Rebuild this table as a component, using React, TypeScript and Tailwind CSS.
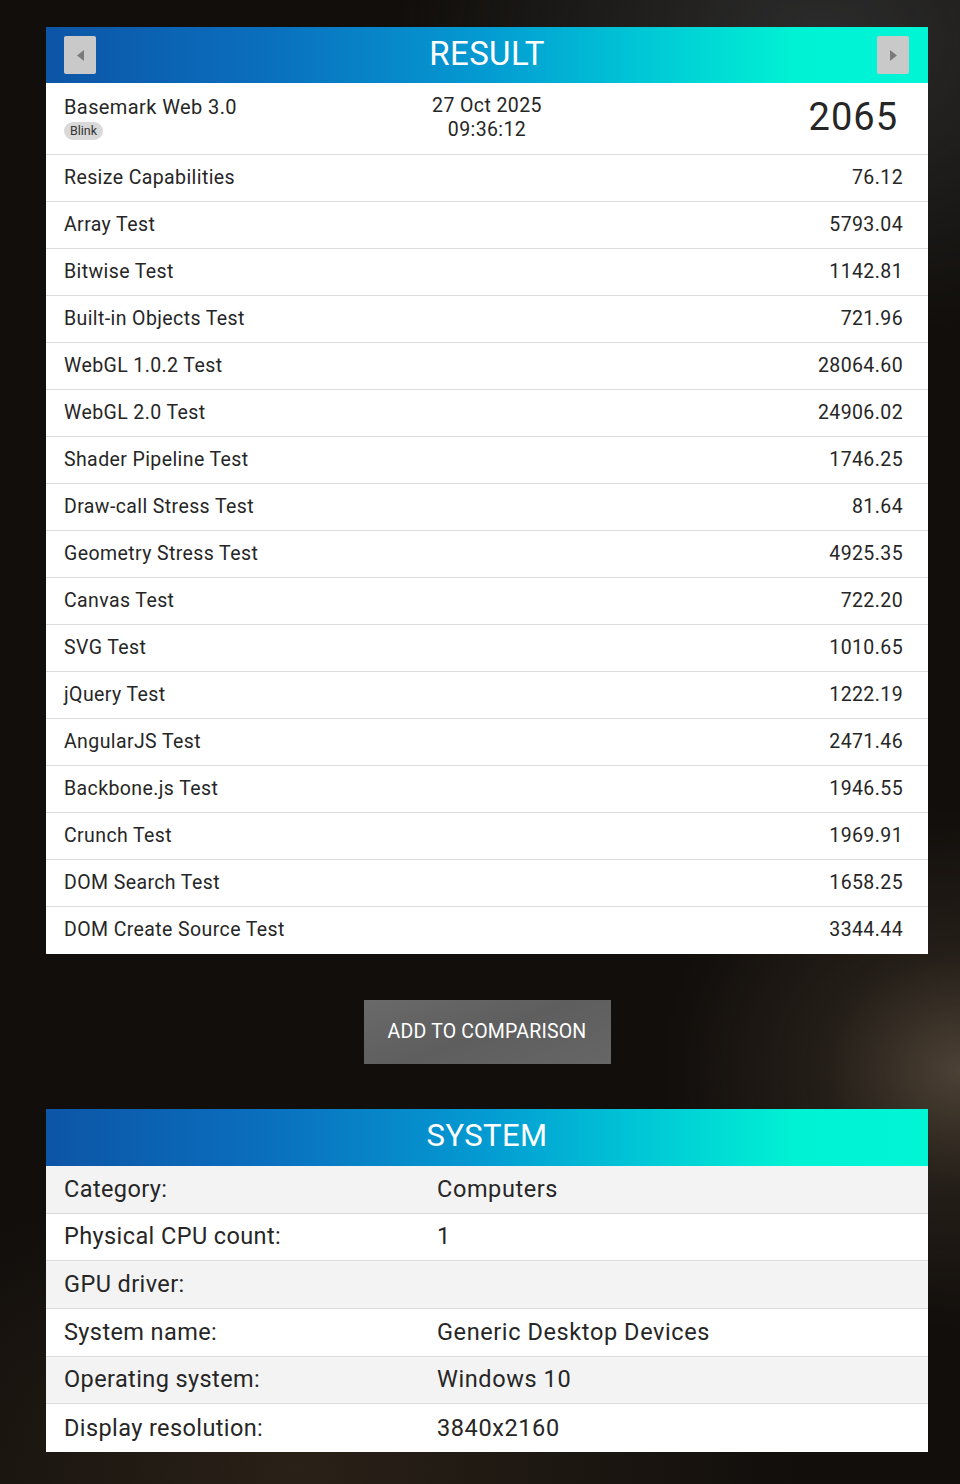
import { ReactNode } from "react";

const tests = [
  { name: "Resize Capabilities", score: "76.12" },
  { name: "Array Test", score: "5793.04" },
  { name: "Bitwise Test", score: "1142.81" },
  { name: "Built-in Objects Test", score: "721.96" },
  { name: "WebGL 1.0.2 Test", score: "28064.60" },
  { name: "WebGL 2.0 Test", score: "24906.02" },
  { name: "Shader Pipeline Test", score: "1746.25" },
  { name: "Draw-call Stress Test", score: "81.64" },
  { name: "Geometry Stress Test", score: "4925.35" },
  { name: "Canvas Test", score: "722.20" },
  { name: "SVG Test", score: "1010.65" },
  { name: "jQuery Test", score: "1222.19" },
  { name: "AngularJS Test", score: "2471.46" },
  { name: "Backbone.js Test", score: "1946.55" },
  { name: "Crunch Test", score: "1969.91" },
  { name: "DOM Search Test", score: "1658.25" },
  { name: "DOM Create Source Test", score: "3344.44" },
];

const system = [
  { label: "Category:", value: "Computers" },
  { label: "Physical CPU count:", value: "1" },
  { label: "GPU driver:", value: "" },
  { label: "System name:", value: "Generic Desktop Devices" },
  { label: "Operating system:", value: "Windows 10" },
  { label: "Display resolution:", value: "3840x2160" },
];

function PanelHeader({ children, tall }: { children: ReactNode; tall?: boolean }) {
  return (
    <div
      className={`relative flex items-center justify-center bg-[linear-gradient(90deg,#0d55a6_0%,#0a6fbe_25%,#049bd2_50%,#00c8d6_68%,#00f2d4_85%,#00f5d5_100%)] pb-[4px] ${
        tall ? "h-[57px]" : "h-[56px]"
      }`}
    >
      {children}
    </div>
  );
}

function ArrowButton({ dir }: { dir: "left" | "right" }) {
  return (
    <button
      className={`absolute top-[9px] flex h-[38px] w-[32px] items-center justify-center rounded-[2px] bg-[#c9c9c9] ${
        dir === "left" ? "left-[18px]" : "right-[19px]"
      }`}
    >
      <svg width="7" height="11" viewBox="0 0 7 11">
        {dir === "left" ? (
          <polygon points="7,0 7,11 0,5.5" fill="#7a7a7a" />
        ) : (
          <polygon points="0,0 0,11 7,5.5" fill="#7a7a7a" />
        )}
      </svg>
    </button>
  );
}

export default function App() {
  return (
    <div className="min-h-[1484px] bg-[#110e0b] bg-[radial-gradient(ellipse_300px_260px_at_960px_1070px,#4c4135_0%,rgba(60,50,40,0.45)_45%,transparent_100%),radial-gradient(ellipse_420px_300px_at_820px_40px,#2c2c2c_0%,transparent_100%),radial-gradient(ellipse_500px_300px_at_300px_1470px,#2a2118_0%,transparent_100%)] pt-[27px] pb-[32px] font-['Roboto',sans-serif] tracking-[0.4px] text-[#262626]">
      <div className="ml-[46px] w-[882px]">
        {/* Result */}
        <div className="bg-white">
          <PanelHeader>
            <ArrowButton dir="left" />
            <h1 className="text-[33px] leading-none text-white">RESULT</h1>
            <ArrowButton dir="right" />
          </PanelHeader>

          <div className="flex h-[72px] items-center border-b border-[#dcdcdc] pl-[18px] pr-[30px]">
            <div className="flex w-[300px] flex-col items-start pb-[2px]">
              <div className="text-[20px] leading-[22px]">Basemark Web 3.0</div>
              <span className="mt-[4px] rounded-full bg-[#d9d9d9] px-[6px] text-[12.5px] leading-[18px] tracking-normal text-[#333]">
                Blink
              </span>
            </div>
            <div className="flex-1 pb-[2px] text-center text-[19.5px] leading-[24px]">
              <div>27 Oct 2025</div>
              <div>09:36:12</div>
            </div>
            <div className="w-[288px] pb-[4px] text-right text-[38px] leading-none tracking-[1px]">2065</div>
          </div>

          {tests.map((t, i) => (
            <div
              key={t.name}
              className={`flex h-[47px] items-center justify-between pb-[1px] pl-[18px] pr-[25px] text-[19.5px] ${
                i < tests.length - 1 ? "border-b border-[#dcdcdc]" : ""
              }`}
            >
              <span>{t.name}</span>
              <span>{t.score}</span>
            </div>
          ))}
        </div>

        {/* Button */}
        <div className="flex justify-center pt-[46px] pb-[45px]">
          <button className="h-[64px] w-[247px] bg-[linear-gradient(160deg,#6a6a6a_0%,#5e5e5e_50%,#666_100%)] text-[19.5px] tracking-[0.2px] text-white">
            ADD TO COMPARISON
          </button>
        </div>

        {/* System */}
        <div className="bg-white">
          <PanelHeader tall>
            <h2 className="text-[31px] leading-none text-white">SYSTEM</h2>
          </PanelHeader>
          {system.map((s, i) => (
            <div
              key={s.label}
              className={`flex h-[47.7px] items-center pl-[18px] text-[23.5px] ${
                i % 2 === 0 ? "bg-[#f3f3f3]" : "bg-white"
              } ${i < system.length - 1 ? "border-b border-[#dcdcdc]" : ""}`}
            >
              <span className="w-[373px]">{s.label}</span>
              <span className="tracking-[0.6px]">{s.value}</span>
            </div>
          ))}
        </div>
      </div>
    </div>
  );
}
